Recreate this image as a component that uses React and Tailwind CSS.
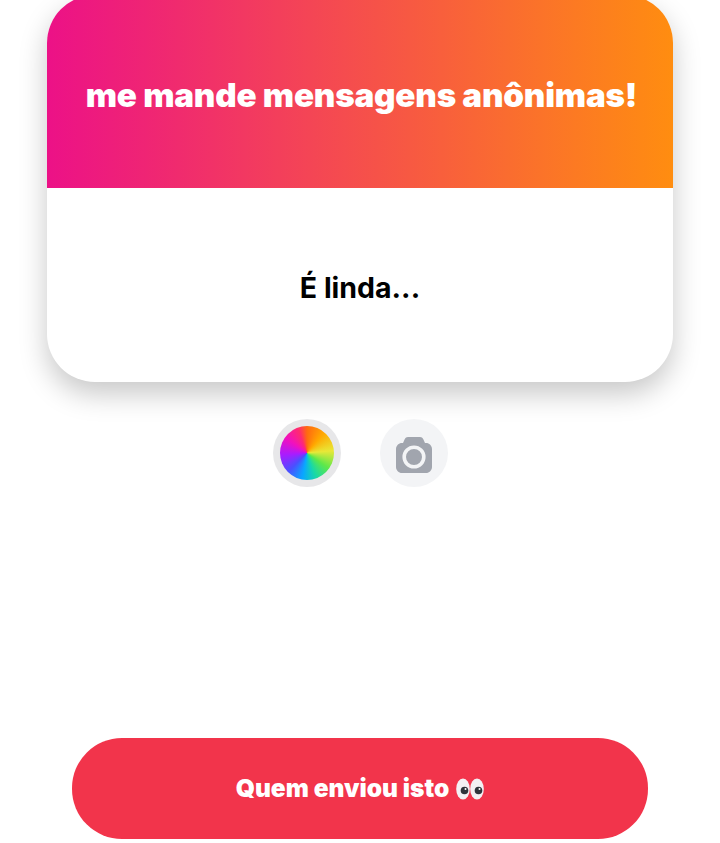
import React from 'react';

const EyesIcon = () => (
  <svg width="28" height="22" viewBox="0 0 28 22" className="shrink-0">
    <ellipse cx="7" cy="11" rx="6.800" ry="10.500" fill="#f3f0f3" />
    <ellipse cx="21" cy="11" rx="6.800" ry="10.500" fill="#f3f0f3" />
    <circle cx="8.500" cy="12.500" r="3.800" fill="#2f343b" />
    <circle cx="22.500" cy="12.500" r="3.800" fill="#2f343b" />
    <circle cx="9.500" cy="11" r="1" fill="#ffffff" />
    <circle cx="23.500" cy="11" r="1" fill="#ffffff" />
  </svg>
);

const CameraIcon = () => (
  <svg width="36" height="36" viewBox="0 0 36 36" className="mt-[4px]">
    <path
      d="M12 0h12c1.500 0 2.600.8 3.200 2L29 6h1c3.300 0 6 2.700 6 6v18c0 3.300-2.700 6-6 6H6c-3.300 0-6-2.700-6-6V12c0-3.300 2.700-6 6-6h1l1.800-4c.6-1.200 1.700-2 3.200-2z"
      fill="#a1a5ae"
    />
    <circle cx="18" cy="20" r="9.800" fill="none" stroke="#f3f4f6" strokeWidth="3.600" />
  </svg>
);

export default function App() {
  return (
    <div className="bg-white h-[843px] overflow-hidden flex flex-col items-center font-['Inter',sans-serif]">
      {/* Card */}
      <div className="w-[626px] mt-[-5px] rounded-[48px] overflow-hidden bg-white shrink-0 shadow-[0_12px_28px_rgba(0,0,0,0.22)]">
        <div className="h-[193px] pt-[9px] pl-[3px] flex items-center justify-center bg-[linear-gradient(90deg,#ec1187,#ff8d10)]">
          <h1 className="text-[33.200px] font-black text-white tracking-[-0.2px] whitespace-nowrap">
            me mande mensagens anônimas!
          </h1>
        </div>
        <div className="h-[194px] pt-[7px] flex items-center justify-center">
          <p className="text-[28.500px] font-bold text-black [font-variant-ligatures:no-contextual]">É linda...</p>
        </div>
      </div>

      {/* Options */}
      <div className="flex gap-[39px] mt-[37px] shrink-0">
        <div className="w-[68px] h-[68px] rounded-full bg-[#e7e7e9] flex items-center justify-center">
          <div className="w-[54px] h-[54px] rounded-full bg-[conic-gradient(#ff6a10,#ffa800_40deg,#e8e838_85deg,#5ee84a_125deg,#18d8a8_160deg,#08a8ff_190deg,#4a50ff_225deg,#a81cff_265deg,#f010c0_305deg,#ff2a70_340deg,#ff6a10)]" />
        </div>
        <div className="w-[68px] h-[68px] rounded-full bg-[#f3f4f6] flex items-center justify-center">
          <CameraIcon />
        </div>
      </div>

      {/* Button */}
      <button className="w-[576px] h-[101px] mt-[251px] shrink-0 rounded-[50px] bg-[#f2344b] text-white text-[24.500px] font-black flex items-center justify-center gap-[7px]">
        Quem enviou isto
        <EyesIcon />
      </button>
    </div>
  );
}
